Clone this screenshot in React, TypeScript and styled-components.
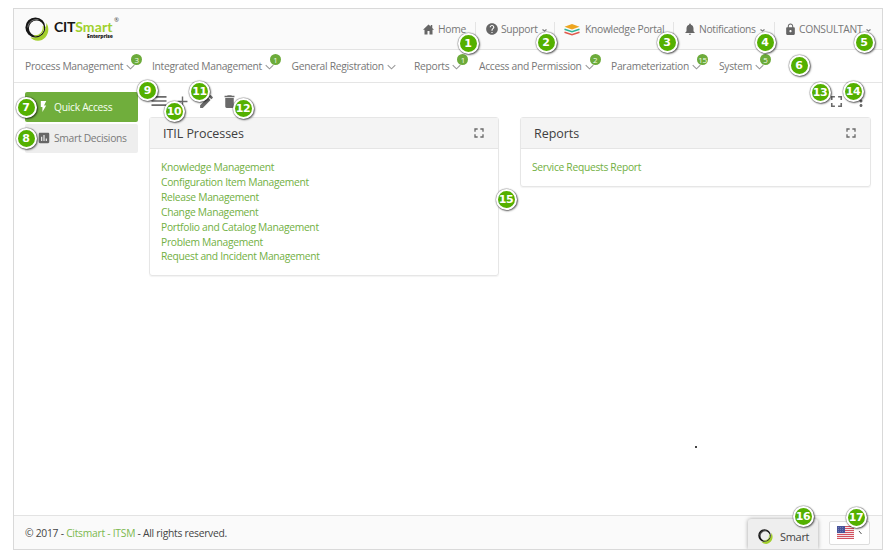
import React from 'react';
import styled, { createGlobalStyle } from 'styled-components';
import { MdHelp, MdNotifications, MdLock, MdMenu, MdAdd, MdEdit, MdDelete, MdFullscreen, MdMoreVert, MdFlashOn, MdAssessment } from 'react-icons/md';

const GlobalStyle = createGlobalStyle`
  * { box-sizing: border-box; }
  body { margin: 0; background: #fff; font-family: "Open Sans", "Noto Sans", sans-serif; font-size: 10.3px; letter-spacing: -0.3px; color: #777; }
  svg { display: block; flex: none; }
`;

const Page = styled.div`
  position: relative;
  width: 892px;
  height: 555px;
  padding: 8px 9px 5px 13px;
  overflow: hidden;
`;
const Frame = styled.div`
  height: 542px;
  border: 1px solid #d9d9d9;
  display: flex;
  flex-direction: column;
`;
const Header = styled.header`
  height: 41px;
  flex: none;
  display: flex;
  align-items: center;
  justify-content: space-between;
  background: #fafafa;
  border-bottom: 1px solid #e3e3e3;
  padding-left: 11px;
`;
const Brand = styled.div`
  display: flex;
  align-items: flex-start;
  gap: 5px;
`;
const BrandText = styled.div`
  width: 66px;
  padding-top: 3px;
  position: relative;
`;
const Word = styled.div`
  font: 700 14px/13px "Lato", sans-serif;
  letter-spacing: -0.2px;
  color: #161616;
  white-space: nowrap;
  span { color: #9fd02c; letter-spacing: 0.1px; }
`;
const Registered = styled.sup`
  position: absolute;
  left: 60px;
  top: 0;
  font: 6px/6px "Open Sans", sans-serif;
  color: #444;
`;
const Edition = styled.div`
  font: 800 5px/5px "Open Sans", sans-serif;
  letter-spacing: -0.1px;
  color: #222;
  margin: 1px 0 0 33px;
`;
const TopMenu = styled.div`
  display: flex;
`;
const TopItem = styled.div<{ $w: number; $gap: number }>`
  width: ${p => p.$w}px;
  height: 15px;
  display: flex;
  align-items: center;
  padding-left: 9px;
  white-space: nowrap;
  & + & { border-left: 1px solid #e4e4e4; }
  > svg:first-child { margin-right: ${p => p.$gap}px; color: #666; }
`;
const Caret = styled.svg`
  margin-left: 4px;
  margin-top: 3px;
`;
const Nav = styled.nav`
  height: 33px;
  flex: none;
  display: flex;
  padding-left: 11px;
  border-bottom: 1px solid #e5e5e5;
`;
const NavItem = styled.div<{ $w: number }>`
  width: ${p => p.$w}px;
  display: flex;
  align-items: center;
  white-space: nowrap;
`;
const ChevronBox = styled.span`
  position: relative;
  margin-left: 3px;
  margin-top: 2px;
`;
const Badge = styled.span`
  position: absolute;
  left: 5px;
  top: -10px;
  width: 11px;
  height: 11px;
  border-radius: 50%;
  background: #6cab3a;
  color: #f2fbea;
  font-size: 8px;
  line-height: 11px;
  text-align: center;
  letter-spacing: -0.3px;
`;
const Body = styled.main`
  flex: 1;
  display: flex;
  gap: 11px;
  padding: 9px 11px 0;
`;
const Side = styled.aside`
  width: 113px;
  display: flex;
  flex-direction: column;
  gap: 2px;
`;
const SideItem = styled.div<{ $active?: boolean }>`
  height: 29.5px;
  border-radius: 2px;
  display: flex;
  align-items: center;
  gap: ${p => (p.$active ? 4 : 3)}px;
  padding-left: 12px;
  white-space: nowrap;
  background: ${p => (p.$active ? '#70ae3c' : '#eeeeee')};
  color: ${p => (p.$active ? '#f6fff0' : '#7a7a7a')};
  svg { color: ${p => (p.$active ? '#fff' : '#666')}; }
`;
const Main = styled.section`
  flex: 1;
`;
const Toolbar = styled.div`
  height: 18px;
  display: flex;
  align-items: center;
  color: #6a6a6a;
`;
const Tool = styled.span<{ $w: number }>`
  width: ${p => p.$w}px;
  display: flex;
  justify-content: center;
`;
const Spacer = styled.span`
  flex: 1;
`;
const Panels = styled.div`
  display: grid;
  grid-template-columns: 350px 351px;
  gap: 21px;
  align-items: start;
  margin-top: 7px;
`;
const Panel = styled.section`
  border: 1px solid #e6e6e6;
  border-radius: 3px;
  box-shadow: 0 1px 1px rgba(0, 0, 0, 0.05);
`;
const PanelHead = styled.div`
  height: 31px;
  display: flex;
  align-items: center;
  justify-content: space-between;
  padding: 0 11px 0 13px;
  background: #f4f4f4;
  border-bottom: 1px solid #e5e5e5;
  font-size: 12.5px;
  letter-spacing: -0.05px;
  color: #404040;
  svg { color: #6a6a6a; }
`;
const Links = styled.div`
  padding: 11px 11px 11px;
  color: #72b043;
  line-height: 14.9px;
`;
const Link = styled.div`
  white-space: nowrap;
`;
const Footer = styled.footer`
  height: 34px;
  flex: none;
  display: flex;
  align-items: center;
  padding: 0 12px 0 11px;
  background: #fafafa;
  border-top: 1px solid #e3e3e3;
  color: #444;
  em { font-style: normal; color: #7cb84e; }
`;
const Copyright = styled.span`
  letter-spacing: -0.26px;
`;
const SmartTab = styled.div`
  width: 70px;
  height: 30px;
  align-self: flex-end;
  display: flex;
  align-items: center;
  gap: 7px;
  padding: 4px 0 0 10px;
  margin-right: 11px;
  background: #eeeeee;
  border-radius: 3px 3px 0 0;
  box-shadow: 0 0 4px rgba(0, 0, 0, 0.35);
  clip-path: inset(-5px -5px 0 -5px);
  font-size: 11px;
`;
const Locale = styled.div`
  width: 41px;
  height: 24px;
  border: 1px solid #ddd;
  border-radius: 2px;
  background: #fff;
  display: flex;
  align-items: center;
  gap: 4px;
  padding-left: 7px;
`;
const Marker = styled.span<{ $x: number; $y: number }>`
  position: absolute;
  left: ${p => p.$x - 10.5}px;
  top: ${p => p.$y - 10.5}px;
  width: 21px;
  height: 21px;
  border: 2px solid #fff;
  border-radius: 50%;
  background: #54b000;
  box-shadow: 0 0 1px 0.5px rgba(0, 0, 0, 0.35), 1px 1px 2px rgba(0, 0, 0, 0.55);
  color: #fff;
  font: bold 11px/17px "DejaVu Sans", sans-serif;
  display: flex;
  justify-content: center;
  letter-spacing: -0.4px;
`;
const Speck = styled.span`
  position: absolute;
  left: 695px;
  top: 446px;
  width: 1.5px;
  height: 2px;
  background: #444;
`;

const Logo = ({ size }: { size: number }) => (
  <svg width={size} height={size} viewBox="0 0 24 24">
    <path d="M21.500 6C26.500 14.500 20.500 23.800 13 23.800c-3.500 0-6-1.500-7.500-3.600C14 22 21 16 21.500 6Z" fill="#a2cf2c" />
    <path fillRule="evenodd" d="M10.400.4a10 10 0 1 0 0 20 10 10 0 0 0 0-20ZM11.500 3.600a7.600 7.600 0 1 1 0 15.200 7.600 7.600 0 0 1 0-15.200Z" fill="#151515" />
    <path d="M18.300 9c.8 6-4 10.400-9 9.700" fill="none" stroke="#a2cf2c" strokeWidth="1.200" />
    <path d="M2.800 10.500C3.300 5 8 1.800 13.500 2.800" fill="none" stroke="#ddd" strokeWidth=".5" />
  </svg>
);
const HomeIcon = () => (
  <svg width="11" height="11" viewBox="0 0 22 22" fill="currentColor">
    <path d="M11 1 0 11.500h3V21h6v-7h4v7h6v-9.500h3L18.500 8V2h-3v3.200Z" />
  </svg>
);
const BookStack = () => (
  <svg width="16" height="13" viewBox="0 0 32 26" fill="none">
    <path d="M16 2 31 7.500 16 13 1 7.500Z" fill="#eda51f" />
    <path d="m1 12.500 15 5 15-5" stroke="#2eb398" strokeWidth="3" />
    <path d="m1 18.500 15 5 15-5" stroke="#e05a4c" strokeWidth="3" />
  </svg>
);
const DownCaret = () => (
  <Caret width="5" height="3" viewBox="0 0 5 3" fill="none" stroke="#777" strokeWidth="1.200"><path d="m.5.500 2 1.500 2-1.500" /></Caret>
);
const Chevron = () => (
  <svg width="9" height="6" viewBox="0 0 9 6" fill="none" stroke="#999" strokeWidth="1.100"><path d="m.7 1.200 3.800 3.600 3.800-3.600" /></svg>
);
const Flag = () => (
  <svg width="17" height="13" viewBox="0 0 17 13">
    <path d="M0 0h17v13H0Z" fill="#f3e5e8" />
    <path d="M0 .5h17M0 2.500h17M0 4.500h17M0 6.500h17M0 8.500h17M0 10.500h17M0 12.500h17" stroke="#d4515f" />
    <path d="M0 0h8v7H0Z" fill="#48549a" />
    <path d="M1 1.500h6M1 3.500h6M1 5.500h6" stroke="#8d94c2" strokeWidth=".6" strokeDasharray="1 1" />
  </svg>
);

const navItems = [
  { label: 'Process Management', w: 127, count: 3 },
  { label: 'Integrated Management', w: 139.5, count: 1 },
  { label: 'General Registration', w: 122.5 },
  { label: 'Reports', w: 65, count: 1 },
  { label: 'Access and Permission', w: 132, count: 2 },
  { label: 'Parameterization', w: 108, count: 15 },
  { label: 'System', w: 60, count: 5 },
];
const processes = ['Knowledge Management', 'Configuration Item Management', 'Release Management', 'Change Management', 'Portfolio and Catalog Management', 'Problem Management', 'Request and Incident Management'];
const markers = [[468, 43], [546, 42], [667, 42], [765, 42], [864, 42], [799, 65.5], [26, 107], [26, 138.5], [147.5, 90.5], [174, 111.5], [199.5, 91], [243, 108], [820, 92], [853, 91.5], [506, 199], [803, 516], [856, 517]];

export default function App() {
  return (
    <Page>
      <GlobalStyle />
      <Frame>
        <Header>
          <Brand>
            <Logo size={24} />
            <BrandText>
              <Word>CIT<span>Smart</span></Word>
              <Registered>®</Registered>
              <Edition>Enterprise</Edition>
            </BrandText>
          </Brand>
          <TopMenu>
            <TopItem $w={61} $gap={4}><HomeIcon />Home</TopItem>
            <TopItem $w={79} $gap={2}><MdHelp size={14} />Support<DownCaret /></TopItem>
            <TopItem $w={119} $gap={5}><BookStack />Knowledge Portal</TopItem>
            <TopItem $w={101} $gap={2}><MdNotifications size={14} />Notifications<DownCaret /></TopItem>
            <TopItem $w={108} $gap={2}><MdLock size={13} />CONSULTANT<DownCaret /></TopItem>
          </TopMenu>
        </Header>
        <Nav>
          {navItems.map(item => (
            <NavItem key={item.label} $w={item.w}>
              {item.label}
              <ChevronBox><Chevron />{item.count && <Badge>{item.count}</Badge>}</ChevronBox>
            </NavItem>
          ))}
        </Nav>
        <Body>
          <Side>
            <SideItem $active><MdFlashOn size={13} />Quick Access</SideItem>
            <SideItem><MdAssessment size={14} />Smart Decisions</SideItem>
          </Side>
          <Main>
            <Toolbar>
              <Tool $w={19}><MdMenu size={20} /></Tool>
              <Tool $w={29}><MdAdd size={17} /></Tool>
              <Tool $w={19}><MdEdit size={17} /></Tool>
              <Tool $w={26}><MdDelete size={17} /></Tool>
              <Spacer />
              <Tool $w={30}><MdFullscreen size={19} /></Tool>
              <Tool $w={20}><MdMoreVert size={18} /></Tool>
            </Toolbar>
            <Panels>
              <Panel>
                <PanelHead>ITIL Processes<MdFullscreen size={16} /></PanelHead>
                <Links>{processes.map(name => <Link key={name}>{name}</Link>)}</Links>
              </Panel>
              <Panel>
                <PanelHead>Reports<MdFullscreen size={16} /></PanelHead>
                <Links><Link>Service Requests Report</Link></Links>
              </Panel>
            </Panels>
          </Main>
        </Body>
        <Footer>
          <Copyright>© 2017 - <em>Citsmart - ITSM</em> - All rights reserved.</Copyright>
          <Spacer />
          <SmartTab><Logo size={15} />Smart</SmartTab>
          <Locale>
            <Flag />
            <svg width="5" height="6" viewBox="0 0 5 6" fill="none" stroke="#555"><path d="m1 1 2.500 3" /></svg>
          </Locale>
        </Footer>
      </Frame>
      <Speck />
      {markers.map(([x, y], i) => <Marker key={i} $x={x} $y={y}>{i + 1}</Marker>)}
    </Page>
  );
}
